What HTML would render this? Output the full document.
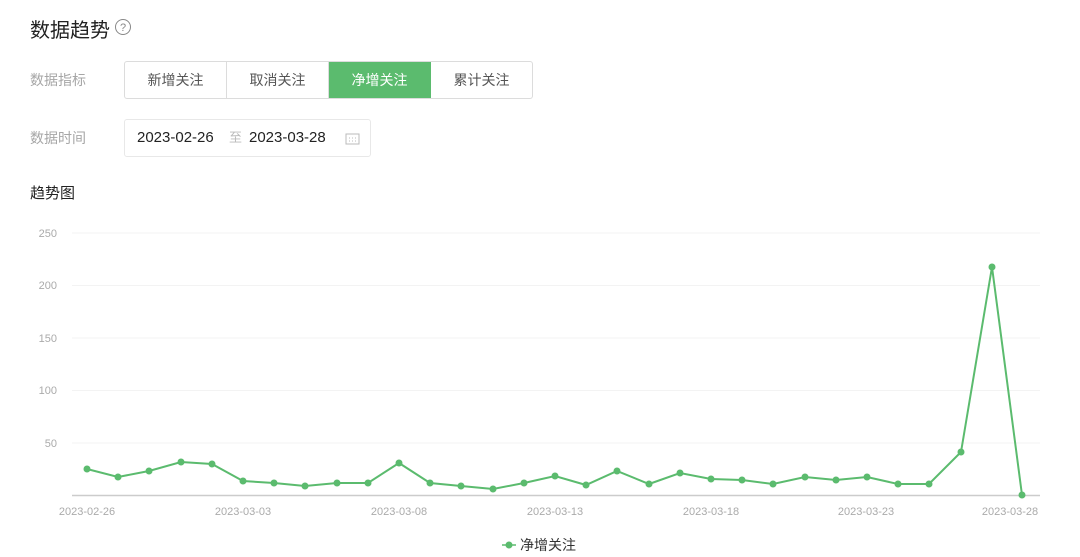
<!DOCTYPE html><html><head><meta charset="utf-8"><style>
body{margin:0;width:1080px;height:557px;background:#fff;font-family:"Liberation Sans","Noto Sans CJK SC",sans-serif;position:relative;overflow:hidden}
.a{position:absolute}
.lbl{color:#a6a6a6;font-size:14px}
.seg{position:absolute;top:61px;left:124px;height:36px;border:1px solid #dcdcdc;border-radius:3px;display:flex;overflow:hidden}
.seg div{width:101px;text-align:center;line-height:36px;font-size:14px;color:#555;border-right:1px solid #dcdcdc}
.seg div:last-child{border-right:none}
.seg .on{background:#5bbb6e;color:#fff;border-color:#5bbb6e}
</style></head><body>
<div class="a" style="left:30px;top:14px;font-size:20px;color:#222">数据趋势</div>
<svg class="a" style="left:114px;top:18px" width="18" height="18"><circle cx="9" cy="9" r="7.5" fill="none" stroke="#888" stroke-width="1"/><text x="9" y="13" font-size="11" text-anchor="middle" fill="#888" font-family="Liberation Sans">?</text></svg>
<div class="a lbl" style="left:30px;top:70px">数据指标</div>
<div class="seg"><div>新增关注</div><div>取消关注</div><div class="on">净增关注</div><div>累计关注</div></div>
<div class="a lbl" style="left:30px;top:128px">数据时间</div>
<div class="a" style="left:124px;top:119px;width:245px;height:36px;border:1px solid #e8e8e8;border-radius:3px;font-size:15px;color:#222;line-height:36px">
<span style="position:absolute;left:12px">2023-02-26</span><span style="position:absolute;left:104px;color:#bbb;font-size:13px">至</span><span style="position:absolute;left:124px">2023-03-28</span>
<svg style="position:absolute;left:220px;top:12px" width="15" height="13"><rect x="1" y="2" width="13" height="10" fill="none" stroke="#bbb"/><path d="M4 6h1M7 6h1M10 6h1M4 9h1M7 9h1M10 9h1" stroke="#bbb"/></svg></div>
<div class="a" style="left:30px;top:182px;font-size:15px;color:#222">趋势图</div>
<svg class="a" style="left:0;top:0" width="1080" height="557" font-family="Liberation Sans" font-size="11" fill="#aaa">
<g stroke="#f3f3f3"><line x1="72" y1="233" x2="1040" y2="233"/><line x1="72" y1="285.5" x2="1040" y2="285.5"/><line x1="72" y1="338" x2="1040" y2="338"/><line x1="72" y1="390.5" x2="1040" y2="390.5"/><line x1="72" y1="443" x2="1040" y2="443"/></g>
<line x1="72" y1="495.5" x2="1040" y2="495.5" stroke="#ccc" stroke-width="1.5"/>
<g text-anchor="end"><text x="57" y="237">250</text><text x="57" y="289">200</text><text x="57" y="342">150</text><text x="57" y="394">100</text><text x="57" y="447">50</text></g>
<g text-anchor="middle"><text x="87" y="515">2023-02-26</text><text x="243" y="515">2023-03-03</text><text x="399" y="515">2023-03-08</text><text x="555" y="515">2023-03-13</text><text x="711" y="515">2023-03-18</text><text x="866" y="515">2023-03-23</text><text x="1010" y="515">2023-03-28</text></g>
<polyline fill="none" stroke="#5bbb6e" stroke-width="2" points="87,469 118,477 149,471 181,462 212,464 243,481 274,483 305,486 337,483 368,483 399,463 430,483 461,486 493,489 524,483 555,476 586,485 617,471 649,484 680,473 711,479 742,480 773,484 805,477 836,480 867,477 898,484 929,484 961,452 992,267 1022,495"/>
<g fill="#5bbb6e"><circle cx="87" cy="469" r="3.5"/><circle cx="118" cy="477" r="3.5"/><circle cx="149" cy="471" r="3.5"/><circle cx="181" cy="462" r="3.5"/><circle cx="212" cy="464" r="3.5"/><circle cx="243" cy="481" r="3.5"/><circle cx="274" cy="483" r="3.5"/><circle cx="305" cy="486" r="3.5"/><circle cx="337" cy="483" r="3.5"/><circle cx="368" cy="483" r="3.5"/><circle cx="399" cy="463" r="3.5"/><circle cx="430" cy="483" r="3.5"/><circle cx="461" cy="486" r="3.5"/><circle cx="493" cy="489" r="3.5"/><circle cx="524" cy="483" r="3.5"/><circle cx="555" cy="476" r="3.5"/><circle cx="586" cy="485" r="3.5"/><circle cx="617" cy="471" r="3.5"/><circle cx="649" cy="484" r="3.5"/><circle cx="680" cy="473" r="3.5"/><circle cx="711" cy="479" r="3.5"/><circle cx="742" cy="480" r="3.5"/><circle cx="773" cy="484" r="3.5"/><circle cx="805" cy="477" r="3.5"/><circle cx="836" cy="480" r="3.5"/><circle cx="867" cy="477" r="3.5"/><circle cx="898" cy="484" r="3.5"/><circle cx="929" cy="484" r="3.5"/><circle cx="961" cy="452" r="3.5"/><circle cx="992" cy="267" r="3.5"/><circle cx="1022" cy="495" r="3.5"/></g>
<line x1="502" y1="545" x2="516" y2="545" stroke="#5bbb6e" stroke-width="1.5"/><circle cx="509" cy="545" r="3.5" fill="#5bbb6e"/>
<text x="520" y="550" font-size="14" fill="#333" font-family="Liberation Sans,Noto Sans CJK SC,sans-serif">净增关注</text>
</svg>
</body></html>
